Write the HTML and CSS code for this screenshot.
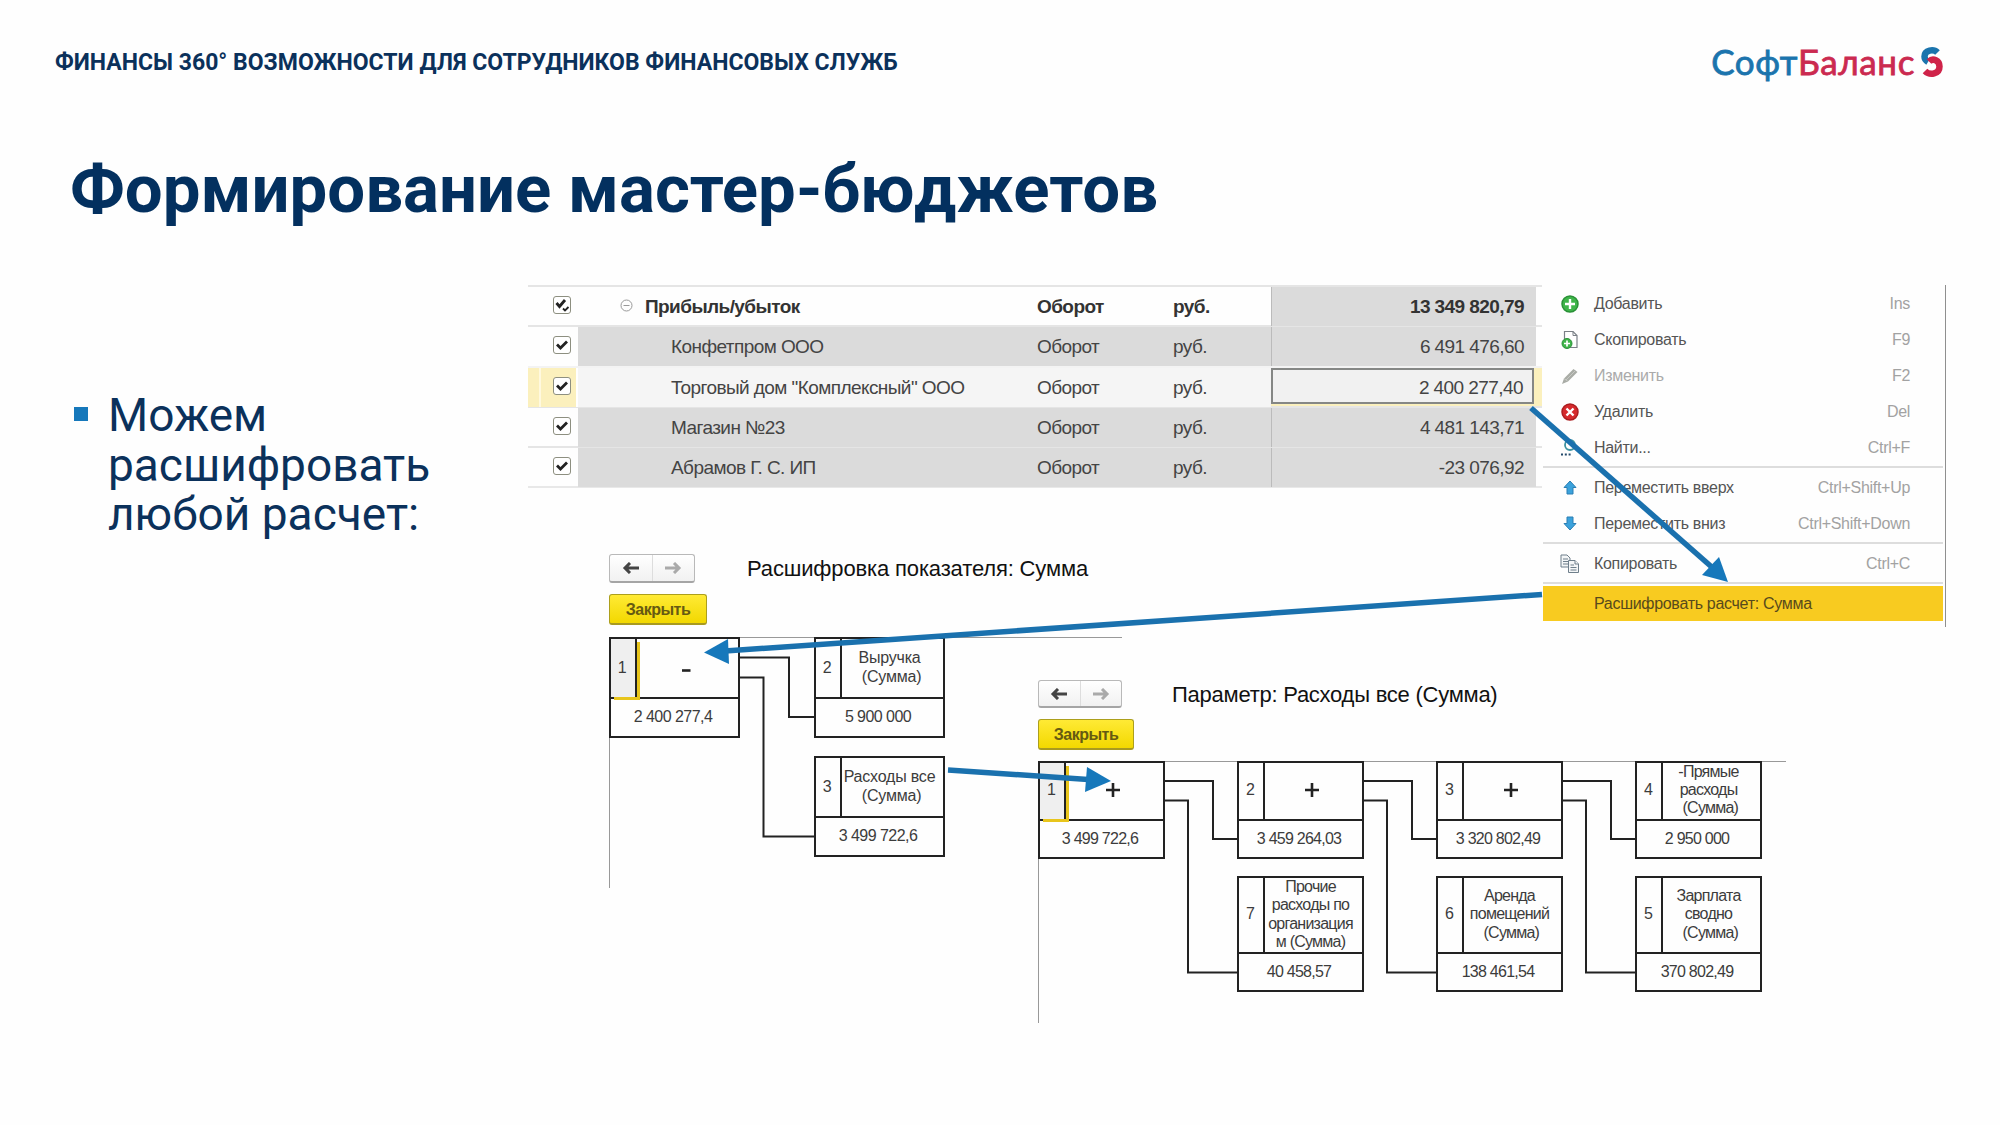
FILE: index.html
```
<!DOCTYPE html>
<html lang="ru">
<head>
	<meta charset="UTF-8">
	<title>Формирование мастер-бюджетов</title>
	<link rel="stylesheet" href="styles.css">
</head>
<body>
	<div id="slide">
		<div id="header">
			<span class="topic">ФИНАНСЫ 360° ВОЗМОЖНОСТИ ДЛЯ СОТРУДНИКОВ ФИНАНСОВЫХ СЛУЖБ</span>
			<div class="logo">
				<span class="soft">Софт</span><span class="balance">Баланс</span>
				<svg width="24" height="32" viewBox="0 0 24 32" fill="none" stroke-width="6.500">
					<path d="M17.500 6.500C13.500 2.500 4.500 4 4.500 10.500C4.500 13 5.500 14.500 8 16" stroke="#1b74ad"/>
					<path d="M9 15.500C13 11.500 19.500 14.500 19.500 20.500C19.500 28 10 30 5 25" stroke="#cf2349"/>
				</svg>
			</div>
		</div>

		<h1>Формирование мастер-бюджетов</h1>

		<div id="content">
			<ul class="points">
				<li>Можем расшифровать любой расчет:</li>
			</ul>

			<div id="board">
				<!-- таблица показателей -->
				<div id="table">
					<div class="row total">
						<div class="check"><span class="box"><svg width="18" height="18" viewBox="0 0 18 18"><path d="M3.500 7L6.500 10.500L12 4" /><path class="thin" d="M10 12.500L12 14.500L15.500 11"/></svg></span></div>
						<div class="name"><svg class="minus" width="13" height="13" viewBox="0 0 13 13"><circle cx="6.500" cy="6.500" r="5.500"/><path d="M3.500 6.500H9.500"/></svg>Прибыль/убыток</div>
						<div class="kind">Оборот</div>
						<div class="unit">руб.</div>
						<div class="sum">13 349 820,79</div>
					</div>
					<div class="row">
						<div class="check"><span class="box"><svg width="18" height="18" viewBox="0 0 18 18"><path d="M4 8.500L7.500 12L14 5.500"/></svg></span></div>
						<div class="name">Конфетпром ООО</div>
						<div class="kind">Оборот</div>
						<div class="unit">руб.</div>
						<div class="sum">6 491 476,60</div>
					</div>
					<div class="row on">
						<div class="check"><span class="box"><svg width="18" height="18" viewBox="0 0 18 18"><path d="M4 8.500L7.500 12L14 5.500"/></svg></span></div>
						<div class="name">Торговый дом "Комплексный" ООО</div>
						<div class="kind">Оборот</div>
						<div class="unit">руб.</div>
						<div class="sum">2 400 277,40</div>
					</div>
					<div class="row">
						<div class="check"><span class="box"><svg width="18" height="18" viewBox="0 0 18 18"><path d="M4 8.500L7.500 12L14 5.500"/></svg></span></div>
						<div class="name">Магазин №23</div>
						<div class="kind">Оборот</div>
						<div class="unit">руб.</div>
						<div class="sum">4 481 143,71</div>
					</div>
					<div class="row">
						<div class="check"><span class="box"><svg width="18" height="18" viewBox="0 0 18 18"><path d="M4 8.500L7.500 12L14 5.500"/></svg></span></div>
						<div class="name">Абрамов Г. С. ИП</div>
						<div class="kind">Оборот</div>
						<div class="unit">руб.</div>
						<div class="sum">-23 076,92</div>
					</div>
				</div>

				<!-- контекстное меню -->
				<div id="menu">
					<div class="item">
						<svg width="20" height="20" viewBox="0 0 20 20"><circle cx="10" cy="10" r="8" fill="#3fb54a" stroke="#2a9137" stroke-width="1.500"/><path d="M10 5V15M5 10H15" stroke="#fff" stroke-width="2.400"/></svg>
						<span>Добавить</span><kbd>Ins</kbd>
					</div>
					<div class="item">
						<svg width="20" height="20" viewBox="0 0 20 20"><path d="M4.500 1.500H13L17 5.500V17.500H4.500Z" fill="#fff" stroke="#7b8087" stroke-width="1.200"/><path d="M13 1.500V5.500H17" fill="none" stroke="#7b8087"/><circle cx="7" cy="13.500" r="5" fill="#3fb54a" stroke="#2a9137"/><path d="M7 10.500V16.500M4 13.500H10" stroke="#fff" stroke-width="1.700"/></svg>
						<span>Скопировать</span><kbd>F9</kbd>
					</div>
					<div class="item off">
						<svg width="20" height="20" viewBox="0 0 20 20"><path d="M2 18L4 12.500L13.500 3L17.500 6L8 15.500Z" fill="#a9aca6"/><path d="M4 12.500L8 15.500M6 14L15.500 4.500" stroke="#c6c8c3" fill="none"/></svg>
						<span>Изменить</span><kbd>F2</kbd>
					</div>
					<div class="item">
						<svg width="20" height="20" viewBox="0 0 20 20"><circle cx="10" cy="10" r="8" fill="#d62a2d" stroke="#ab1d20" stroke-width="1.500"/><path d="M6.500 6.500L13.500 13.500M13.500 6.500L6.500 13.500" stroke="#fff" stroke-width="2.400"/></svg>
						<span>Удалить</span><kbd>Del</kbd>
					</div>
					<div class="item">
						<svg width="20" height="20" viewBox="0 0 20 20"><circle cx="10" cy="7" r="5" fill="none" stroke="#3e93a0" stroke-width="1.800"/><path d="M1 16.500H11" stroke="#23496b" stroke-width="2" stroke-dasharray="2 1.800"/></svg>
						<span>Найти...</span><kbd>Ctrl+F</kbd>
					</div>
					<hr>
					<div class="item">
						<svg width="20" height="20" viewBox="0 0 20 20"><path d="M10 3L16 9.500H13V16H7V9.500H4Z" fill="#3ba2dc" stroke="#2b7fb4"/></svg>
						<span>Переместить вверх</span><kbd>Ctrl+Shift+Up</kbd>
					</div>
					<div class="item">
						<svg width="20" height="20" viewBox="0 0 20 20"><path d="M10 16L4 9.500H7V3H13V9.500H16Z" fill="#3ba2dc" stroke="#2b7fb4"/></svg>
						<span>Переместить вниз</span><kbd>Ctrl+Shift+Down</kbd>
					</div>
					<hr>
					<div class="item">
						<svg width="20" height="20" viewBox="0 0 20 20" fill="#f4f6f7" stroke="#6f7f8b"><path d="M1 1H7L10 4V13H1Z"/><path d="M3 5H8M3 7.500H8M3 10H8"/><path d="M8.500 6.500H15L18.500 10V18.500H8.500Z"/><path d="M15 6.500V10H18.500M10.500 11H14M10.500 13.500H16.500M10.500 16H16.500"/></svg>
						<span>Копировать</span><kbd>Ctrl+C</kbd>
					</div>
					<hr>
					<div class="item current"><span>Расшифровать расчет: Сумма</span></div>
				</div>

				<!-- расшифровка показателя -->
				<div class="window first">
					<div class="bar">
						<div class="nav">
							<span><svg width="18" height="12" viewBox="0 0 18 12"><path d="M3 6H17M8 1L3 6L8 11"/></svg></span>
							<span class="next"><svg width="18" height="12" viewBox="0 0 18 12"><path d="M1 6H15M10 1L15 6L10 11"/></svg></span>
						</div>
						<div class="caption">Расшифровка показателя: Сумма</div>
					</div>
					<span class="close">Закрыть</span>
					<div class="scheme">
						<svg class="links" width="513" height="251">
							<path d="M131 20.500H180V80H205"/>
							<path d="M131 40.500H154.500V199.500H205"/>
						</svg>
						<div class="node n1 active"><div class="num">1</div><div class="text sign"><svg width="10" height="18"><path d="M1 12.500H9.500"/></svg></div><div class="value">2 400 277,4</div></div>
						<div class="node n2"><div class="num">2</div><div class="text">Выручка<br>&nbsp;(Сумма)</div><div class="value">5 900 000</div></div>
						<div class="node n3"><div class="num">3</div><div class="text">Расходы все<br>&nbsp;(Сумма)</div><div class="value">3 499 722,6</div></div>
					</div>
				</div>

				<!-- расшифровка параметра -->
				<div class="window second">
					<div class="bar">
						<div class="nav">
							<span><svg width="18" height="12" viewBox="0 0 18 12"><path d="M3 6H17M8 1L3 6L8 11"/></svg></span>
							<span class="next"><svg width="18" height="12" viewBox="0 0 18 12"><path d="M1 6H15M10 1L15 6L10 11"/></svg></span>
						</div>
						<div class="caption">Параметр: Расходы все (Сумма)</div>
					</div>
					<span class="close">Закрыть</span>
					<div class="scheme">
						<svg class="links" width="748" height="262">
							<path d="M127 20H175V78H200M127 39.500H150V211.500H200"/>
							<path d="M326 20H374V78H399M326 39.500H349V211.500H399"/>
							<path d="M525 20H573V78H598M525 39.500H548V211.500H598"/>
						</svg>
						<div class="node c1 active"><div class="num">1</div><div class="text sign"><svg width="16" height="16"><path d="M1 8H15M8 1V15"/></svg></div><div class="value">3 499 722,6</div></div>
						<div class="node c2"><div class="num">2</div><div class="text sign"><svg width="16" height="16"><path d="M1 8H15M8 1V15"/></svg></div><div class="value">3 459 264,03</div></div>
						<div class="node c3"><div class="num">3</div><div class="text sign"><svg width="16" height="16"><path d="M1 8H15M8 1V15"/></svg></div><div class="value">3 320 802,49</div></div>
						<div class="node c4"><div class="num">4</div><div class="text">-Прямые<br>расходы<br>&nbsp;(Сумма)</div><div class="value">2 950 000</div></div>
						<div class="node c2 low"><div class="num">7</div><div class="text">Прочие<br>расходы по<br>организация<br>м (Сумма)</div><div class="value">40 458,57</div></div>
						<div class="node c3 low"><div class="num">6</div><div class="text">Аренда<br>помещений<br>&nbsp;(Сумма)</div><div class="value">138 461,54</div></div>
						<div class="node c4 low"><div class="num">5</div><div class="text">Зарплата<br>сводно<br>&nbsp;(Сумма)</div><div class="value">370 802,49</div></div>
					</div>
				</div>
			</div>
		</div>

		<!-- стрелки поверх всего -->
		<svg id="arrows" width="2000" height="1125">
			<path d="M1531 408L1714 569"/>
			<path d="M1542 594.500L725 651"/>
			<path d="M948 770L1088 779.500"/>
			<polygon points="1728,582 1702,575 1719,557"/>
			<polygon points="704,652.500 728,639 729,664"/>
			<polygon points="1111,781 1087,767 1085,792"/>
		</svg>
	</div>
</body>
</html>
```

FILE: styles.css
```
* {
	box-sizing: border-box;
}
body {
	margin: 0;
	background: #fff;
	font-family: "Liberation Sans", Arial, sans-serif;
	color: #3c3c3c;
}
#slide {
	position: relative;
	width: 2000px;
	height: 1125px;
	overflow: hidden;
	background: #fefefe;
}

/* шапка */
#header {
	display: flex;
	justify-content: space-between;
	align-items: center;
	height: 124px;
	padding: 0 56px 0 55px;
}
.topic {
	font: bold 23px Roboto, sans-serif;
	color: #0b315b;
}
.logo {
	display: flex;
	align-items: center;
	padding-bottom: 3px;
	font: 35px/40px Lato, sans-serif;
	letter-spacing: .6px;
}
.logo .soft {
	color: #1b74ad;
	-webkit-text-stroke: .8px #1b74ad;
}
.logo .balance {
	color: #cb2a50;
	-webkit-text-stroke: .8px #cb2a50;
}
.logo svg {
	margin: 3px 0 0 5px;
}
h1 {
	margin: 0;
	padding-left: 70px;
	height: 161px;
	font: bold 67.150px/130px Roboto, sans-serif;
	color: #03305f;
}

#content {
	display: flex;
}
.points {
	width: 528px;
	margin: 0;
	padding: 106px 80px 0 74px;
	list-style: none;
}
.points li {
	display: flex;
	font: 46px/49.500px Roboto, sans-serif;
	color: #0b315b;
}
.points li::before {
	content: "";
	flex: none;
	width: 14px;
	height: 14px;
	margin: 16px 20px 0 0;
	background: #1678bb;
}

/* окна лежат на общей сетке и частично перекрываются */
#board {
	display: grid;
	grid-template-columns: 1014px 404px;
	align-items: start;
}

/* таблица */
#table {
	grid-area: 1 / 1;
	border-bottom: 2px solid #e8e8e8;
	font-size: 19px;
	letter-spacing: -.570px;
	color: #444;
}
.row {
	display: grid;
	grid-template-columns: 50px 458px 137px 98px 265px;
	height: 40.300px;
	border-top: 2px solid #e5e5e5;
	line-height: 39px;
	white-space: nowrap;
}
.row > div {
	background: #dbdbdb;
}
.row .check {
	display: flex;
	align-items: center;
	padding: 0 0 3px 25px;
	background: none;
}
.box {
	width: 18px;
	height: 18px;
	border: 1.500px solid #8d8f80;
	border-radius: 3px;
	background: #fff;
}
.box svg {
	display: block;
	margin: -1px;
	fill: none;
	stroke: #222;
	stroke-width: 2.800;
}
.box .thin {
	stroke-width: 1.800;
}
.row .name {
	padding-left: 93px;
}
.row .kind {
	padding-left: 1px;
}
.row .sum {
	padding-right: 12px;
	border-left: 1px solid #bbb;
	text-align: right;
}
.total {
	font-weight: bold;
	color: #333;
}
.total > div {
	background: none;
}
.total .sum {
	background: #dbdbdb;
}
.total .name {
	display: flex;
	align-items: center;
	padding-left: 42px;
}
.minus {
	margin: -2px 12px 0 0;
	fill: none;
	stroke: #999;
}
.on {
	background: #fbf0bd;
	border-top-color: #f3f3f3;
}
.on > div {
	background: #f5f5f5;
}
.on .check {
	border-right: 2px solid #fff;
	background: linear-gradient(to right, #fbf0bd 11px, #fff9df 11px, #fff9df 13px, #fbf0bd 13px);
}
.on .sum {
	height: 36px;
	border: 2px solid #858785;
	margin-right: 2px;
	padding-right: 9px;
	line-height: 35px;
	background: #f1f1f1;
}

/* меню */
#menu {
	grid-area: 1 / 2;
	height: 342px;
	padding: 1px 2px 0 1px;
	border-right: 1.500px solid #8f8f8f;
	font-size: 16px;
	letter-spacing: -.300px;
	color: #555;
}
.item {
	display: flex;
	align-items: center;
	height: 35.900px;
	padding: 0 33px 0 17px;
	white-space: nowrap;
}
.item svg {
	margin-right: 14px;
}
.item kbd {
	margin-left: auto;
	font: inherit;
	color: #a2a2a2;
}
.off {
	color: #aaa;
}
#menu hr {
	height: 2px;
	margin: 1px 0 2px;
	border: 0;
	background: #ddd;
}
/* пункт «Копировать» чуть ниже остальных */
#menu hr ~ hr {
	margin: 0 0 2px;
}
.current {
	padding-left: 51px;
	height: 35px;
	background: #f8cb20;
	color: #574a1c;
}

/* окна расшифровки */
.window {
	grid-row: 1;
	grid-column: 1 / 3;
}
.bar {
	display: flex;
	align-items: center;
}
.nav {
	display: flex;
	width: 86px;
	height: 29px;
	border: 1px solid #b9b9b9;
	border-bottom: 2px solid #a5a5a5;
	border-radius: 3px;
	background: linear-gradient(#fff, #f1f1f1);
}
.nav span {
	display: flex;
	flex: 1;
	align-items: center;
	justify-content: center;
}
.nav svg {
	fill: none;
	stroke: #444;
	stroke-width: 3;
}
.nav .next {
	border-left: 1px solid #ddd;
}
.nav .next svg {
	stroke: #aaa;
}
.caption {
	font-size: 22px;
	letter-spacing: -.150px;
	color: #111;
}
.close {
	display: block;
	border: 1px solid #ac9f1c;
	border-bottom: 2px solid #a89a20;
	border-radius: 3px;
	background: linear-gradient(#ffea35, #f2d800);
	font-weight: bold;
	font-size: 16px;
	letter-spacing: -.500px;
	text-align: center;
	color: #665a12;
}
.scheme {
	position: relative;
	border-top: 1.500px solid #999;
	border-left: 1.500px solid #999;
}
.links {
	position: absolute;
	left: -1px;
	top: -1px;
	fill: none;
	stroke: #222;
	stroke-width: 2;
}
.node {
	position: absolute;
	display: grid;
	grid-template-columns: 26px 1fr;
	border: 2px solid #222;
	text-align: center;
	white-space: nowrap;
}
.num {
	display: flex;
	align-items: center;
	justify-content: center;
	padding: 0 2px 1px 0;
	border-right: 2px solid #222;
}
.text {
	display: flex;
	flex-direction: column;
	justify-content: center;
	padding: 0 6px 2px 0;
}
.sign {
	align-items: center;
}
.sign svg {
	margin-left: 3px;
	fill: none;
	stroke: #222;
	stroke-width: 2.600;
}
.value {
	grid-column: 1 / 3;
	padding-right: 3px;
	border-top: 2px solid #222;
}
.active .num {
	background: #efefef;
	box-shadow: 3px 3px 0 #e8c51c;
	z-index: 1;
}

.first {
	margin: 269px 0 0 81px;
}
.first .caption {
	margin-left: 52px;
}
.first .close {
	width: 98px;
	height: 31px;
	margin-top: 11px;
	line-height: 30px;
}
.first .scheme {
	width: 513px;
	height: 251px;
	margin-top: 12px;
}
.first .node {
	width: 131px;
	height: 101px;
	grid-template-rows: 58px 1fr;
	font-size: 16px;
	letter-spacing: -.200px;
	line-height: 19px;
}
.first .value {
	letter-spacing: -.550px;
	line-height: 35px;
}
.first .n1 {
	left: -1px;
	top: -1px;
}
.first .n2 {
	left: 204px;
	top: -1px;
}
.first .n3 {
	left: 204px;
	top: 118px;
}

.second {
	margin: 395px 0 0 510px;
}
.second .nav {
	width: 84px;
	height: 28px;
}
.second .caption {
	margin-left: 50px;
	padding-top: 1px;
	letter-spacing: -.250px;
}
.second .close {
	width: 96px;
	height: 31px;
	margin-top: 11px;
	line-height: 29px;
}
.second .scheme {
	width: 748px;
	height: 262px;
	margin-top: 11px;
}
.second .node {
	top: -1px;
	width: 127px;
	height: 98px;
	grid-template-rows: 56px 1fr;
	font-size: 16px;
	letter-spacing: -.750px;
	line-height: 18.300px;
}
.second .low {
	top: 114px;
	height: 116px;
	grid-template-rows: 74px 1fr;
}
.second .low .text {
	padding-bottom: 1px;
}
.second .value {
	line-height: 35px;
}
.second .c1 {
	left: -1px;
}
.second .c2 {
	left: 198px;
}
.second .c3 {
	left: 397px;
}
.second .c4 {
	left: 596px;
}

#arrows {
	position: absolute;
	left: 0;
	top: 0;
	z-index: 2;
	fill: #1678bb;
}
#arrows path {
	fill: none;
	stroke: #1a71ae;
	stroke-width: 5.500;
}
```
